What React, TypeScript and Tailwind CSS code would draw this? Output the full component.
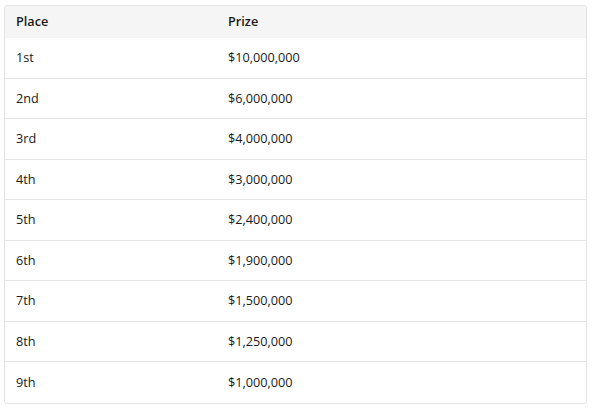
import React from "react";

const rows: [string, string][] = [
  ["1st", "$10,000,000"],
  ["2nd", "$6,000,000"],
  ["3rd", "$4,000,000"],
  ["4th", "$3,000,000"],
  ["5th", "$2,400,000"],
  ["6th", "$1,900,000"],
  ["7th", "$1,500,000"],
  ["8th", "$1,250,000"],
  ["9th", "$1,000,000"],
];

export default function App() {
  return (
    <div
      className="w-[593px] h-[410px] bg-white pt-[5px] pl-[4px]"
      style={{ fontFamily: '"Open Sans", "Noto Sans", sans-serif' }}
    >
      <div className="w-[583px] border border-[#e3e3e3] rounded-[3px] overflow-hidden text-[12.7px] text-[#1a1a1a]">
        <div className="flex items-center h-[32px] bg-[#f5f5f5] font-semibold">
          <div className="w-[223px] pl-[11px]">Place</div>
          <div>Prize</div>
        </div>
        {rows.map(([p, v], i) => (
          <div
            key={p}
            className={`flex items-center h-[40.5px] ${i < rows.length - 1 ? "border-b border-[#e3e3e3]" : ""}`}
          >
            <div className="w-[223px] pl-[11px]">{p}</div>
            <div>{v}</div>
          </div>
        ))}
      </div>
    </div>
  );
}
